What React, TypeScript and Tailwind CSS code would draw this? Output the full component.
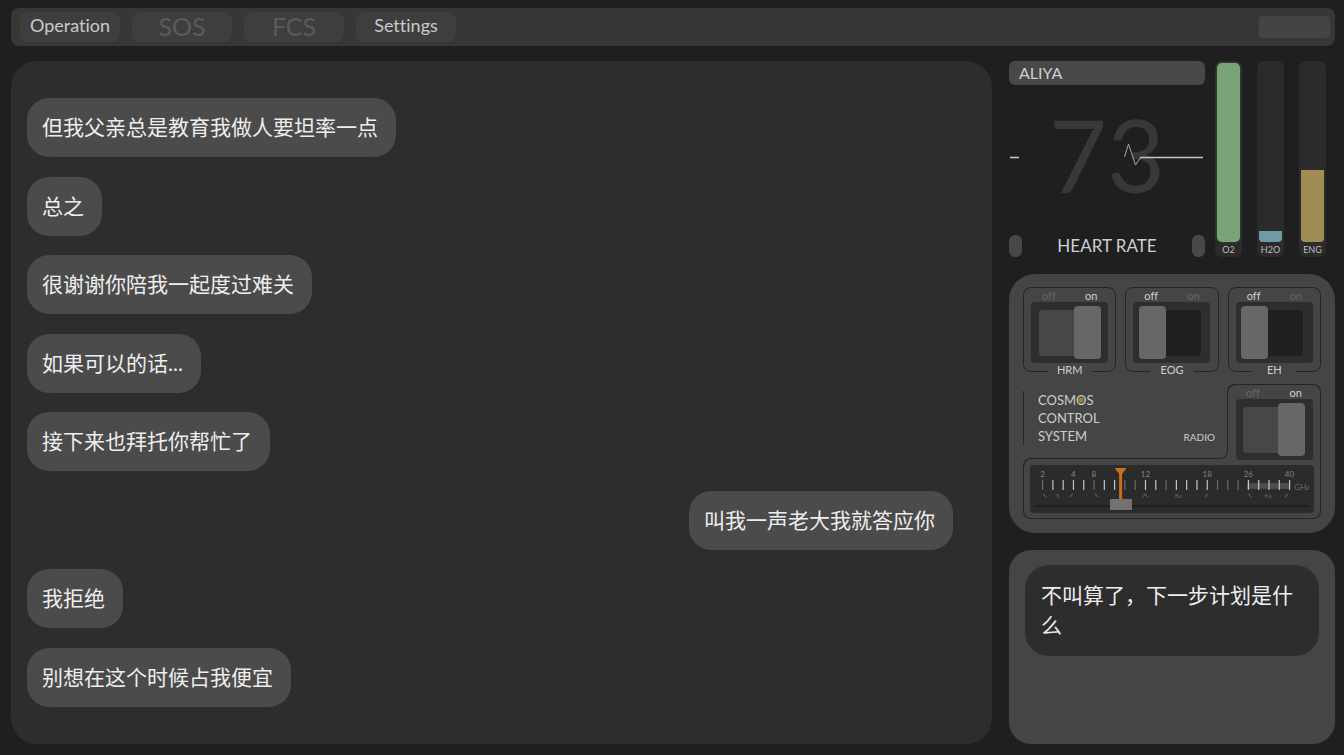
import React, { useState } from 'react';
import clsx from 'clsx';

const messages = [
  { id: 1, text: '但我父亲总是教育我做人要坦率一点', mine: false },
  { id: 2, text: '总之', mine: false },
  { id: 3, text: '很谢谢你陪我一起度过难关', mine: false },
  { id: 4, text: '如果可以的话...', mine: false },
  { id: 5, text: '接下来也拜托你帮忙了', mine: false },
  { id: 6, text: '叫我一声老大我就答应你', mine: true },
  { id: 7, text: '我拒绝', mine: false },
  { id: 8, text: '别想在这个时候占我便宜', mine: false },
];

const tabs = [
  { label: 'Operation', enabled: true },
  { label: 'SOS', enabled: false },
  { label: 'FCS', enabled: false },
  { label: 'Settings', enabled: true },
];

const gauges = [
  { label: 'O2', level: 100, color: 'bg-[#7aa377] shadow-[0_0_3px_#3c5a3a] rounded-[5px]' },
  { label: 'H2O', level: 6, color: 'bg-[#6f9ba3] rounded-b-[4px]' },
  { label: 'ENG', level: 40, color: 'bg-[#a08c55] rounded-b-[4px]' },
];

const TopBar: React.FC = () => (
  <header className="flex h-[38px] items-center justify-between rounded-[8px] bg-[#373737] pl-[9px] pr-[5px]">
    <nav className="flex gap-3">
      {tabs.map((tab) => (
        <button
          key={tab.label}
          type="button"
          disabled={!tab.enabled}
          className={clsx(
            'flex h-[30px] w-[100px] items-center justify-center rounded-[8px] bg-[#3e3e3e]',
            tab.enabled ? 'pb-1 text-[18px] text-[#cacaca]' : 'text-[25px] text-[#5a5a5a]'
          )}
        >
          {tab.label}
        </button>
      ))}
    </nav>
    <button type="button" aria-label="Menu" className="h-[22px] w-[71px] rounded-[4px] bg-[#444444]" />
  </header>
);

const ChatPanel: React.FC = () => (
  <main className="flex min-w-0 flex-1 flex-col justify-between gap-2 rounded-[26px] bg-[#2d2d2d] py-[37px] pl-4 pr-[39px]">
    {messages.map((message) => (
      <p
        key={message.id}
        className={clsx(
          'rounded-[22px] bg-[#4b4b4b] pb-[15px] pl-[15px] pr-[18px] pt-[13px] text-[21px] leading-[31px] text-[#eeeeee]',
          message.mine ? 'self-end' : 'self-start'
        )}
      >
        {message.text}
      </p>
    ))}
  </main>
);

const HeartMonitor: React.FC = () => (
  <section className="flex flex-1 flex-col justify-between">
    <h2 className="h-6 rounded-[6px] bg-[#484848] pl-[10px] text-[16px] leading-[23px] text-[#cfcfcf]">ALIYA</h2>
    <div className="relative pb-3 text-center text-[100px] leading-[100px] text-[#383838]">
      73
      <svg
        viewBox="0 0 196 60"
        className="absolute inset-x-0 top-6 w-full"
        fill="none"
        stroke="#c4c4c4"
        aria-hidden="true"
      >
        <path d="M1 29.5h9" strokeWidth="1.6" />
        <path d="M115.500 29l4-13 7 21 5-7.500" strokeWidth="1" stroke="#a5a5a5" />
        <path d="M131 29.500h63" strokeWidth="1.600" />
      </svg>
    </div>
    <div className="flex items-center justify-between">
      <span className="h-[22px] w-[13px] rounded-[6px] bg-[#484848]" />
      <span className="text-[17px] leading-[22px] text-[#cfcfcf]">HEART RATE</span>
      <span className="h-[22px] w-[13px] rounded-[6px] bg-[#484848]" />
    </div>
  </section>
);

const Gauges: React.FC = () => (
  <section className="flex gap-[15px]">
    {gauges.map((gauge) => (
      <div key={gauge.label} className="flex w-[27px] flex-col rounded-[7px] bg-[#2b2b2b] px-[2px] pt-[2px]">
        <div className="flex flex-1 flex-col justify-end">
          <div className={gauge.color} style={{ height: `${gauge.level}%` }} />
        </div>
        <span className="text-center text-[9px] leading-[15px] text-[#bdbdbd]">{gauge.label}</span>
      </div>
    ))}
  </section>
);

interface ToggleProps {
  name: string;
  on: boolean;
  onChange: (on: boolean) => void;
}

const Toggle: React.FC<ToggleProps> = ({ name, on, onChange }) => (
  <label className="block">
    <span className="flex h-[14px] justify-between px-[18px] text-[11px] leading-[15px]">
      <span className={on ? 'text-[#666666]' : 'text-[#d0d0d0]'}>off</span>
      <span className={on ? 'text-[#d0d0d0]' : 'text-[#666666]'}>on</span>
    </span>
    <input
      type="checkbox"
      role="switch"
      aria-label={name}
      className="sr-only"
      checked={on}
      onChange={(e) => onChange(e.target.checked)}
    />
    <span className="mx-auto flex h-[61px] w-[77px] items-center justify-center rounded-[4px] bg-[#2e2e2e]">
      <span
        className={clsx(
          'flex h-[46px] w-[62px] items-center rounded-[4px]',
          on ? 'justify-end bg-[#474747]' : 'mr-1 justify-start bg-[#202020]'
        )}
      >
        <span className="h-[53px] w-[27px] shrink-0 rounded-[4px] bg-[#676767]" />
      </span>
    </span>
  </label>
);

const marks = [
  { at: 0, label: '2' },
  { at: 3, label: '4' },
  { at: 5, label: '8' },
  { at: 10, label: '12' },
  { at: 16, label: '18' },
  { at: 20, label: '26' },
  { at: 24, label: '40' },
];

const dimTicks = [0, 5, 8, 9, 12, 17, 18, 19];

const RadioTuner: React.FC = () => {
  const [value, setValue] = useState(30);
  // the thumb is 22 wide and travels along the 275 wide track
  const needle = 16 + (value / 100) * 253 - 1;

  return (
    <div className="rounded-[4px] bg-[#2b2b2b]">
      <svg viewBox="0 0 285 34" className="block w-full" aria-hidden="true">
        <rect x="218" y="18" width="42" height="6" fill="#4d4d4d" />
        {Array.from({ length: 25 }, (_, i) => (
          <rect
            key={i}
            x={12 + i * 10.33}
            y="15"
            width="1.2"
            height="10"
            fill={dimTicks.includes(i) ? '#6c6c6c' : '#c6c6c6'}
          />
        ))}
        <g fill="#858585" fontSize="8" textAnchor="middle">
          {marks.map((mark) => (
            <text key={mark.label} x={12.5 + mark.at * 10.33} y="12">
              {mark.label}
            </text>
          ))}
          <text x="273" y="25" fill="#6a6a6a">GHz</text>
        </g>
        <g fill="#6a6a6a" fontSize="6" textAnchor="middle">
          <text x="28" y="33">S</text>
          <text x="149" y="33">Ku</text>
          <text x="239" y="33">Ka</text>
        </g>
        <path
          d="M13 29l3 3M43 29l-3 3M65 29l3 3M113 32l3-3M115 29l3 3M176 32l2-3M219 29l3 3M256 32l3-3"
          stroke="#747474"
          fill="none"
        />
        <path d={`M${needle - 6} 3h12l-4.500 6v25h-3v-25z`} fill="#c8701a" />
      </svg>
      <input
        type="range"
        aria-label="Frequency"
        min="0"
        max="100"
        value={value}
        onChange={(e) => setValue(Number(e.target.value))}
        className="mx-[4px] block h-[14px] w-[275px] appearance-none bg-transparent [&::-webkit-slider-runnable-track]:h-[2px] [&::-webkit-slider-runnable-track]:bg-[#202020] [&::-webkit-slider-thumb]:-mt-[6px] [&::-webkit-slider-thumb]:h-[11px] [&::-webkit-slider-thumb]:w-[22px] [&::-webkit-slider-thumb]:appearance-none [&::-webkit-slider-thumb]:bg-[#727272]"
      />
    </div>
  );
};

const ControlPanel: React.FC = () => {
  const [state, setState] = useState({ HRM: true, EOG: false, EH: false, RADIO: true });
  const change = (name: string) => (on: boolean) => setState((prev) => ({ ...prev, [name]: on }));

  return (
    <section className="rounded-[26px] bg-[#454545] px-[14px] pb-[14px] pt-[13px]">
      <div className="grid grid-cols-3 gap-[9px]">
        {(['HRM', 'EOG', 'EH'] as const).map((name) => (
          <div key={name} className="h-[85px] rounded-[8px] border border-[#252525]">
            <Toggle name={name} on={state[name]} onChange={change(name)} />
            <div className="mx-auto w-[44px] bg-[#454545] text-center text-[11px] leading-[14px] text-[#d0d0d0]">
              {name}
            </div>
          </div>
        ))}
      </div>

      {/* Radio block, the outline steps round the COSMOS text */}
      <div className="mt-3 flex">
        <div className="ml-[6px] mt-2 flex h-[67px] flex-1 items-end justify-between rounded-br-[8px] border-b border-r border-[#252525] pb-[13px] pr-3">
          <div className="-ml-[6px] border-l border-[#252525] pl-[14px] text-[13px] leading-[18px] text-[#cdcdcd]">
            COSM
            <span className="relative">
              O
              <span className="absolute left-1/2 top-1/2 size-[5px] -translate-x-1/2 -translate-y-1/2 rounded-full bg-[#a8841c]" />
            </span>
            S
            <br />
            CONTROL
            <br />
            SYSTEM
          </div>
          <span className="text-[10px] leading-[16px] text-[#cdcdcd]">RADIO</span>
        </div>
        <div className="relative h-[75px] w-[93px] rounded-t-[8px] border-r border-t border-[#252525] before:absolute before:-left-px before:-top-px before:size-[9px] before:rounded-tl-[8px] before:border-l before:border-t before:border-[#252525]">
          <Toggle name="RADIO" on={state.RADIO} onChange={change('RADIO')} />
        </div>
      </div>
      <div className="relative rounded-[8px] rounded-tr-none border-x border-b border-[#252525] px-[6px] pb-[5px] pt-[6px] before:absolute before:-left-px before:-top-px before:size-[8px] before:rounded-tl-[8px] before:border-l before:border-t before:border-[#252525]">
        <RadioTuner />
      </div>
    </section>
  );
};

const ReplyPanel: React.FC = () => (
  <section className="flex-1 rounded-[22px] bg-[#454545] px-4 py-[15px]">
    <button
      type="button"
      className="w-full rounded-[24px] bg-[#2d2d2d] px-4 pb-4 pt-[15px] text-left text-[21px] leading-[30px] text-[#eeeeee]"
    >
      不叫算了，下一步计划是什么
    </button>
  </section>
);

const App: React.FC = () => {
  return (
    <div
      lang="zh-CN"
      className="flex min-h-screen flex-col gap-[15px] bg-[#1f1f1f] pb-[11px] pl-[11px] pr-[9px] pt-2 font-[Lato,'Noto_Sans_CJK_SC',sans-serif] [font-variant-ligatures:none]"
    >
      <TopBar />
      <div className="flex flex-1 gap-[17px]">
        <ChatPanel />
        <aside className="flex w-[326px] shrink-0 flex-col gap-[17px]">
          <div className="flex h-[196px] gap-[10px] pr-[9px]">
            <HeartMonitor />
            <Gauges />
          </div>
          <ControlPanel />
          <ReplyPanel />
        </aside>
      </div>
    </div>
  );
};

export default App;
